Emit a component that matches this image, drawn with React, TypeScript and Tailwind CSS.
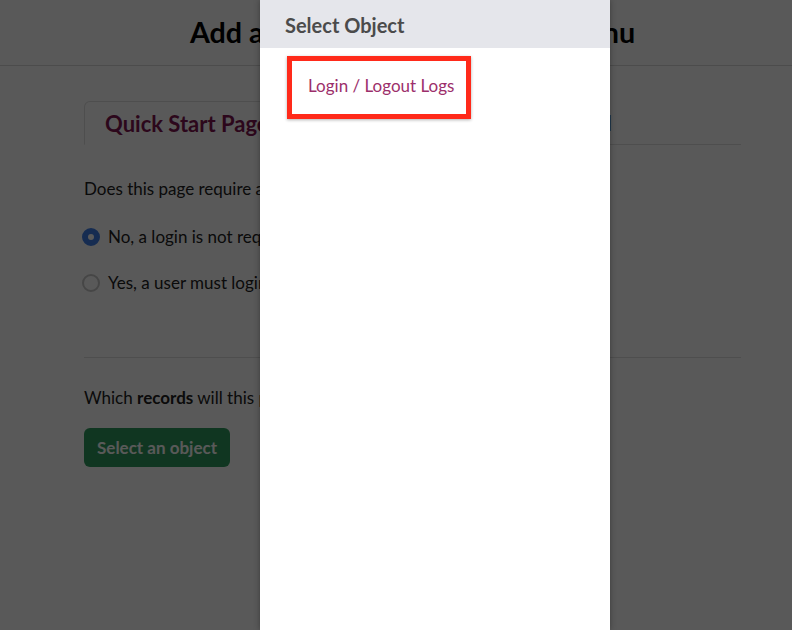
import React from "react";

const Radio = ({ checked }: { checked?: boolean }) => (
  <span
    className={
      "flex h-[18px] w-[18px] shrink-0 items-center justify-center rounded-full border-2 " +
      (checked ? "border-[#3f7fe8] bg-[#3f7fe8]" : "border-[#c8c8c8] bg-white")
    }
  >
    {checked && <span className="h-[6px] w-[6px] rounded-full bg-white" />}
  </span>
);

const App = () => {
  return (
    <div className="relative h-[630px] w-[792px] overflow-hidden bg-white font-['Lato',sans-serif] text-[#222]">
      {/* page behind the overlay */}
      <div className="ml-[84px] w-[657px]">
        <div className="flex h-[65px] items-center justify-center">
          <h1 className="text-[28.7px] font-bold text-black">Add a New Page to the Main Menu</h1>
        </div>
      </div>
      <div className="h-px w-full bg-[#d9d9d9]" />

      <div className="ml-[84px] w-[657px]">
        {/* tabs */}
        <div className="mt-[35px] flex items-end border-b border-[#dedede]">
          <div className="flex w-[528px] items-end">
            <div className="-mb-px rounded-t-md border border-b-white border-[#dedede] bg-white px-[20px] pb-[4px] pt-[5px]">
              <span className="text-[22px] font-bold text-[#7f1650]">Quick Start Page</span>
            </div>
            <div className="flex-1 pb-[6px] text-right">
              <span className="text-[21px] text-[#333]">Use a Tutorial</span>
            </div>
          </div>
        </div>

        <p className="mt-[32px] text-[17px] leading-[24px]">Does this page require a login?</p>
        <div className="mt-[24px] flex flex-col gap-[22px]">
          <label className="-ml-[2px] flex items-center gap-[8px] text-[17px] leading-[24px]">
            <Radio checked />
            No, a login is not required to view this page
          </label>
          <label className="-ml-[2px] flex items-center gap-[8px] text-[17px] leading-[24px]">
            <Radio />
            Yes, a user must login to view this page
          </label>
        </div>

        <div className="mt-[62px] h-px bg-[#dedede]" />

        <p className="mt-[28px] text-[17px] leading-[24px]">
          Which <b>records</b> will this page display?
        </p>
        <button className="mt-[18px] h-[39px] rounded-md bg-[#2f9c5e] px-[13px] text-[17px] font-bold text-white">
          Select an object
        </button>
      </div>

      {/* dim overlay */}
      <div className="absolute inset-0 bg-black/65" />

      {/* side panel */}
      <div className="absolute bottom-0 left-[260px] top-0 w-[350px] bg-white shadow-[0_0_6px_rgba(0,0,0,0.35)]">
        <div className="flex h-[48px] items-center bg-[#e5e6eb] pl-[25px] pt-[2px]">
          <h2 className="text-[20px] font-bold text-[#4b4b4b]">Select Object</h2>
        </div>
        <div className="pl-[27px] pt-[8px]">
          <div className="inline-flex h-[63px] w-[184px] items-center border-[5px] border-[#ff2a1a] pb-[3px] pl-[16px] shadow-[0_1px_3px_rgba(0,0,0,0.3)]">
            <span className="text-[17px] text-[#9c2f6b]">Login / Logout Logs</span>
          </div>
        </div>
      </div>
    </div>
  );
};

export default App;
